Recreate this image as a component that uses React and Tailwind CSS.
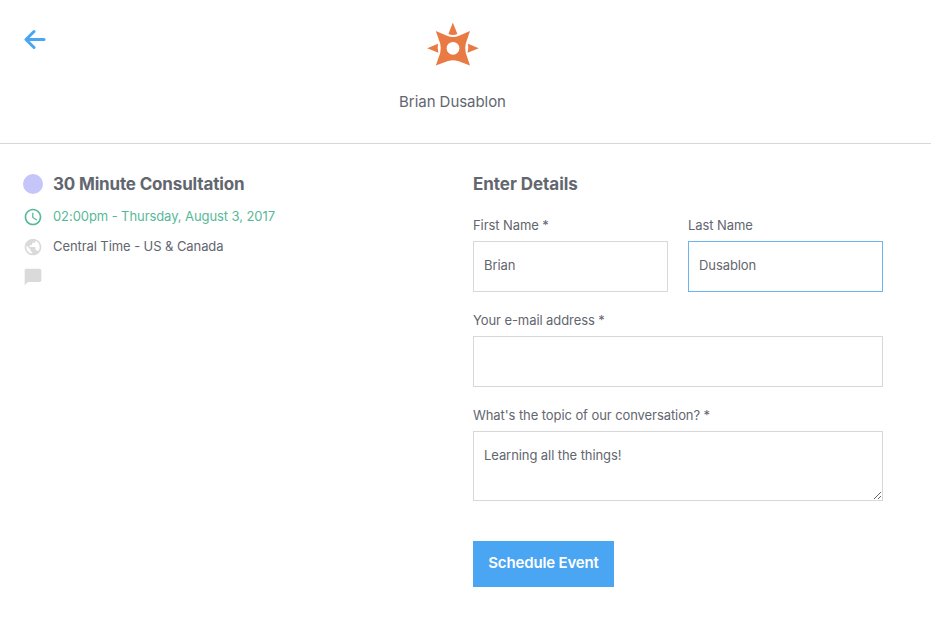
import { useState } from "react";
import { MdChatBubble, MdPublic, MdSchedule } from "react-icons/md";

const Label = ({ htmlFor, children }) => (
    <label htmlFor={htmlFor} className="block h-[26px] leading-5 whitespace-nowrap">
        {children}
    </label>
);

const Logo = () => (
    <svg width="52" height="44" viewBox="0 0 52 44" fill="#ea7a44">
        <path d="M25.8 -0.4 L30.4 11 Q26 13 21.4 11 Z" />
        <path d="M0.2 25.3 L11 20.8 Q10.2 25.3 11.4 29.8 Z" />
        <path d="M51.8 25.3 L41 20.8 Q41.8 25.3 40.6 29.8 Z" />
        <path
            fillRule="evenodd"
            d="M8.8 8 L20 12.8 Q26 15.4 32 12.8 L43 8 L38.8 20.5 Q37.6 25.3 38.8 30 L43 42.6 L31 38 Q26 36.4 21 38 L8.8 42.6 L13.2 30 Q14.4 25.3 13.2 20.5 Z M26 18.9 a6.4 6.4 0 1 0 0 12.8 a6.4 6.4 0 1 0 0 -12.8 Z"
        />
    </svg>
);

const App = () => {
    const [form, setForm] = useState({
        first: "Brian",
        last: "Dusablon",
        email: "",
        topic: "Learning all the things!",
    });

    const handleChange = (e) => {
        setForm({ ...form, [e.target.name]: e.target.value });
    };

    return (
        <div className="min-h-[625px] bg-white font-['Inter',sans-serif] text-[13px] tracking-[-0.08px] text-[#62666f]">

            {/* HEADER */}
            <header className="grid h-[144px] grid-cols-[24px_1fr_50px] border-b border-[#d8d8d8]">
                <button type="button" aria-label="Back" className="mt-[29px] ml-6 h-[22px] w-[22px]">
                    <svg width="22" height="22" viewBox="0 0 22 22" fill="none" stroke="#4aa5f3" strokeWidth="3" strokeLinecap="round" strokeLinejoin="round">
                        <path d="M10 2.5 L2 10.5 L10 18.5 M2.5 10.5 H20" />
                    </svg>
                </button>
                <div className="flex flex-col items-center pt-[23px]">
                    <Logo />
                    <p className="mt-[23px] text-[15px] leading-6 tracking-[-0.05px]">Brian Dusablon</p>
                </div>
            </header>

            <main className="flex">

                {/* EVENT */}
                <section className="w-[473px] pt-[30px] pl-[23px]">
                    <div className="flex h-5 items-center gap-[10px]">
                        <span className="h-5 w-5 rounded-full bg-[#c5c5fa]" />
                        <h1 className="text-[17px] leading-5 font-bold tracking-[-0.16px]">30 Minute Consultation</h1>
                    </div>
                    <div className="mt-[13px] flex h-5 items-center gap-[10px] text-[#57b998]">
                        <MdSchedule size={20} />
                        <span>02:00pm - Thursday, August 3, 2017</span>
                    </div>
                    <div className="mt-[10px] flex h-5 items-center gap-[10px]">
                        <MdPublic size={20} color="#dadada" />
                        <span>Central Time - US &amp; Canada</span>
                    </div>
                    <div className="mt-[10px] flex h-5 items-center">
                        <MdChatBubble size={20} color="#dadada" />
                    </div>
                </section>

                {/* DETAILS */}
                <form className="w-[410px] pt-[30px]" onSubmit={(e) => e.preventDefault()}>
                    <h2 className="h-5 text-[17px] leading-5 font-bold tracking-[-0.05px]">Enter Details</h2>

                    <div className="mt-[21px] grid grid-cols-2 gap-5">
                        <div>
                            <Label htmlFor="first">First Name *</Label>
                            <input
                                id="first"
                                name="first"
                                value={form.first}
                                onChange={handleChange}
                                className="block h-[51px] w-full border border-[#d8d8d8] px-[10px] pb-[3px] outline-none focus:border-[#6bb5ee]"
                            />
                        </div>
                        <div>
                            <Label htmlFor="last">Last Name</Label>
                            <input
                                id="last"
                                name="last"
                                value={form.last}
                                onChange={handleChange}
                                className="block h-[51px] w-full border border-[#6bb5ee] px-[10px] pb-[3px] outline-none"
                            />
                        </div>
                    </div>

                    <div className="mt-[18px]">
                        <Label htmlFor="email">Your e-mail address *</Label>
                        <input
                            id="email"
                            name="email"
                            type="email"
                            value={form.email}
                            onChange={handleChange}
                            className="block h-[51px] w-full border border-[#d8d8d8] px-[10px] pb-[3px] outline-none focus:border-[#6bb5ee]"
                        />
                    </div>

                    <div className="mt-[18px]">
                        <Label htmlFor="topic">What's the topic of our conversation? *</Label>
                        <textarea
                            id="topic"
                            name="topic"
                            value={form.topic}
                            onChange={handleChange}
                            className="block h-[70px] w-full resize border border-[#d8d8d8] px-[10px] pt-[13px] leading-5 outline-none focus:border-[#6bb5ee]"
                        />
                    </div>

                    <button
                        type="submit"
                        className="mt-10 block h-[46px] w-[141px] bg-[#4aa5f3] pb-[2px] text-[15px] font-semibold tracking-[-0.15px] whitespace-nowrap text-white"
                    >
                        Schedule Event
                    </button>
                </form>

            </main>

        </div>
    );
};

export default App;
